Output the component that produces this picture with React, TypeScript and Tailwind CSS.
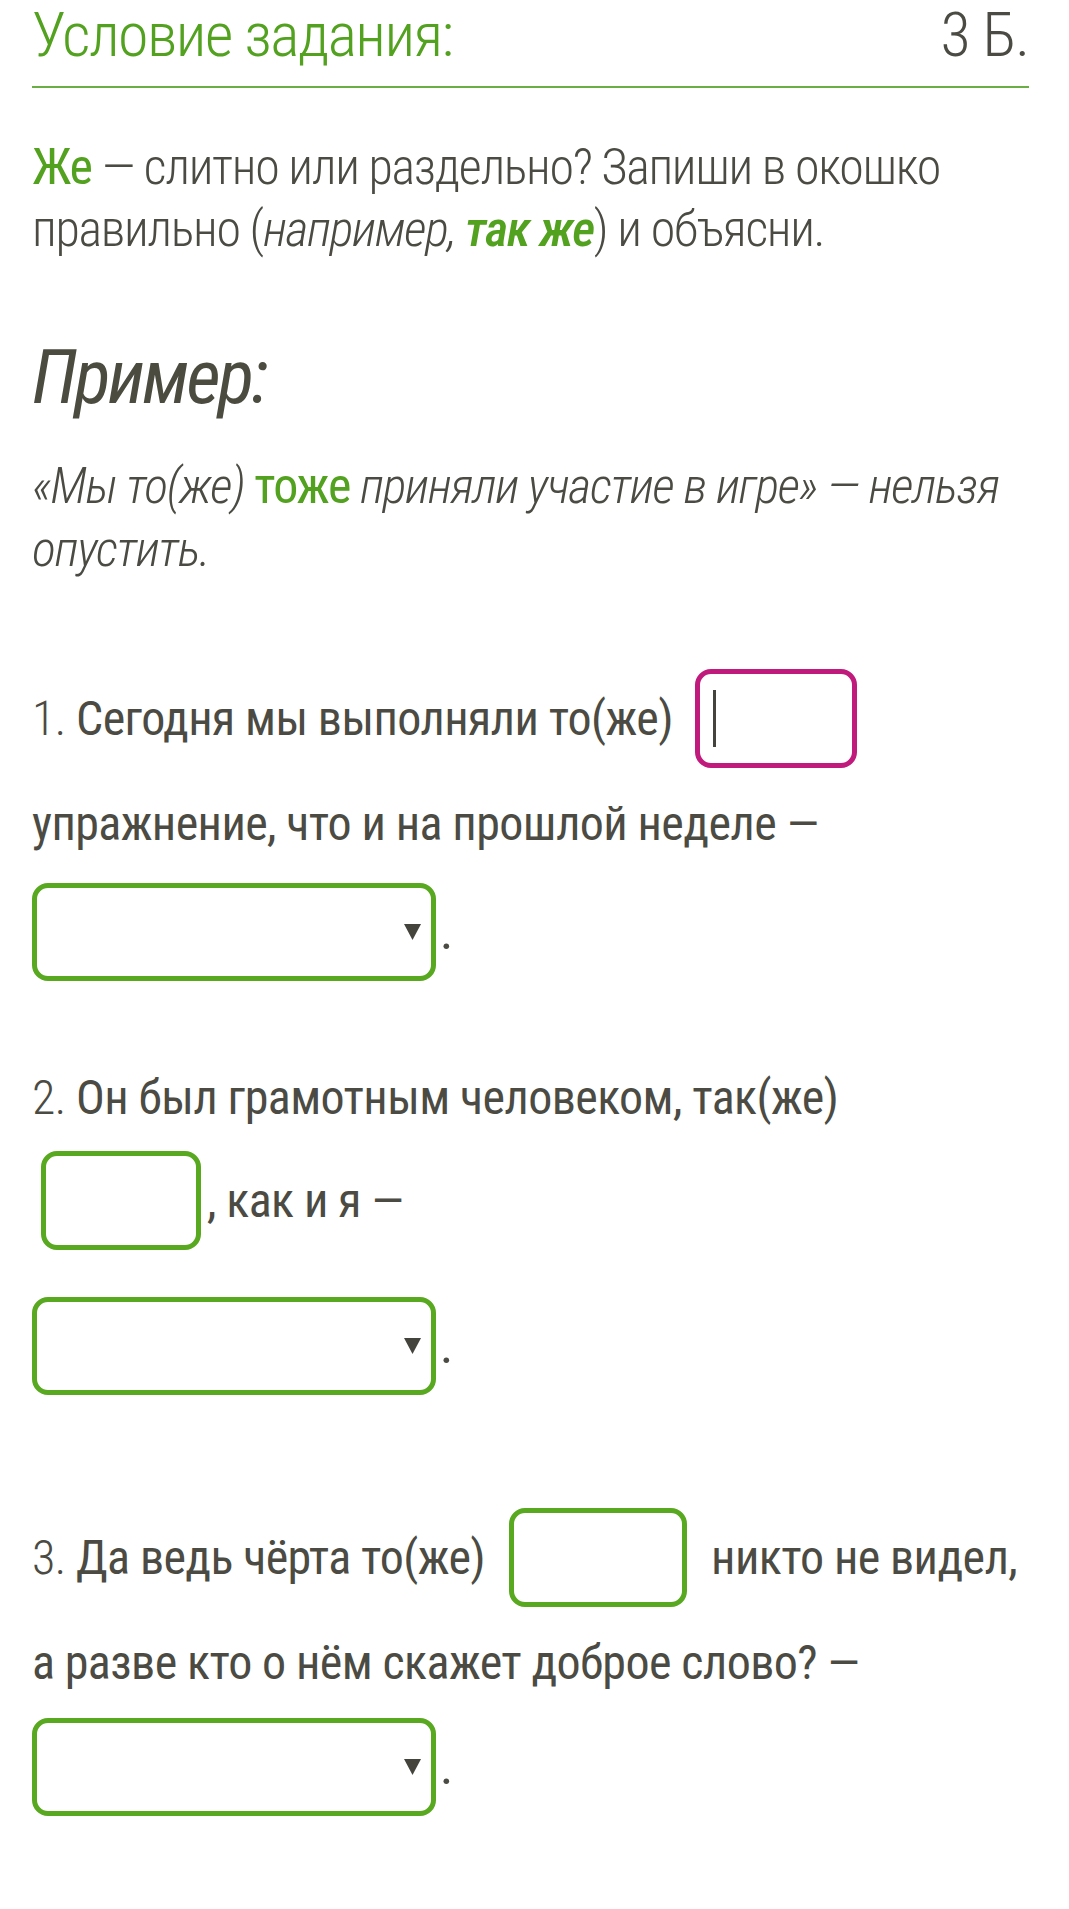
import React from "react";

const GREEN = "text-[#52a11f]";

function InputBox({ w, magenta = false, cursor = false }: { w: string; magenta?: boolean; cursor?: boolean }) {
  return (
    <div
      className={`relative shrink-0 h-[99px] ${w} rounded-[16px] border-[5px] bg-white ${
        magenta ? "border-[#c01a7c]" : "border-[#58a820]"
      }`}
    >
      {cursor && <div className="absolute left-[13px] top-[16px] h-[57px] w-[3px] bg-[#44443c]" />}
    </div>
  );
}

function SelectBox() {
  return (
    <div className="flex items-center">
      <div className="flex h-[98px] w-[404px] items-center justify-end rounded-[16px] border-[5px] border-[#58a820] bg-white pr-[10px]">
        <svg width="17" height="16" viewBox="0 0 17 16">
          <path d="M0 0 L17 0 L8.5 16 Z" fill="#44443c" />
        </svg>
      </div>
      <span className="ml-[4px] text-[50px] leading-none">.</span>
    </div>
  );
}

export default function App() {
  return (
    <div
      className="min-h-[1909px] w-full bg-white pl-8 pr-10 text-[#4b4b43] tracking-[-0.038em]"
      style={{ fontFamily: "'Roboto Condensed', Roboto, 'Noto Sans', sans-serif" }}
    >
      {/* Header */}
      <div className="flex items-start justify-between border-b-2 border-[#6aae45] pt-[4px] pb-[20px]">
        <div className={`text-[62px] font-light leading-none tracking-[-0.025em] ${GREEN}`}>Условие задания:</div>
        <div className="text-[62px] font-light leading-none tracking-[-0.018em] text-[#4b4b43]">3 Б.</div>
      </div>

      {/* Intro */}
      <p className="mt-[48px] text-[50px] font-light leading-[62px] tracking-[-0.026em]">
        <span className={`font-normal ${GREEN}`}>Же</span> — слитно или раздельно? Запиши в окошко правильно (
        <span className="italic">например, </span>
        <span className={`font-medium italic ${GREEN}`}>так же</span>) и объясни.
      </p>

      {/* Example */}
      <h2 className="mt-[80px] text-[75px] font-normal italic leading-[75px] tracking-[-0.035em] text-[#4b4b40]">
        Пример:
      </h2>
      <p className="mt-[40px] text-[50px] font-light italic leading-[63px] tracking-[-0.025em]">
        «Мы то(же) <span className={`font-normal not-italic ${GREEN}`}>тоже</span> приняли участие в игре» — нельзя
        <br />
        опустить.
      </p>

      {/* Item 1 */}
      <div className="mt-[88px] text-[48px]">
        <div className="flex h-[99px] items-center">
          <span className="whitespace-nowrap leading-none">
            <span className="font-light">1.</span> Сегодня мы выполняли то(же)
          </span>
          <div className="ml-[22px]">
            <InputBox w="w-[162px]" magenta cursor />
          </div>
        </div>
        <div className="mt-[31px] whitespace-nowrap leading-[50px]">упражнение, что и на прошлой неделе —</div>
        <div className="mt-[34px]">
          <SelectBox />
        </div>
      </div>

      {/* Item 2 */}
      <div className="mt-[92px] text-[48px]">
        <div className="whitespace-nowrap leading-[50px]">
          <span className="font-light">2.</span> Он был грамотным человеком, так(же)
        </div>
        <div className="mt-[28px] flex h-[99px] items-center">
          <div className="ml-[9px]">
            <InputBox w="w-[160px]" />
          </div>
          <span className="ml-[6px] whitespace-nowrap leading-none">, как и я —</span>
        </div>
        <div className="mt-[47px]">
          <SelectBox />
        </div>
      </div>

      {/* Item 3 */}
      <div className="mt-[113px] text-[48px]">
        <div className="flex h-[99px] items-center">
          <span className="whitespace-nowrap leading-none">
            <span className="font-light">3.</span> Да ведь чёрта то(же)
          </span>
          <div className="ml-[24px]">
            <InputBox w="w-[178px]" />
          </div>
          <span className="ml-[24px] whitespace-nowrap leading-none">никто не видел,</span>
        </div>
        <div className="mt-[31px] whitespace-nowrap leading-[50px]">а разве кто о нём скажет доброе слово? —</div>
        <div className="mt-[30px]">
          <SelectBox />
        </div>
      </div>
    </div>
  );
}
